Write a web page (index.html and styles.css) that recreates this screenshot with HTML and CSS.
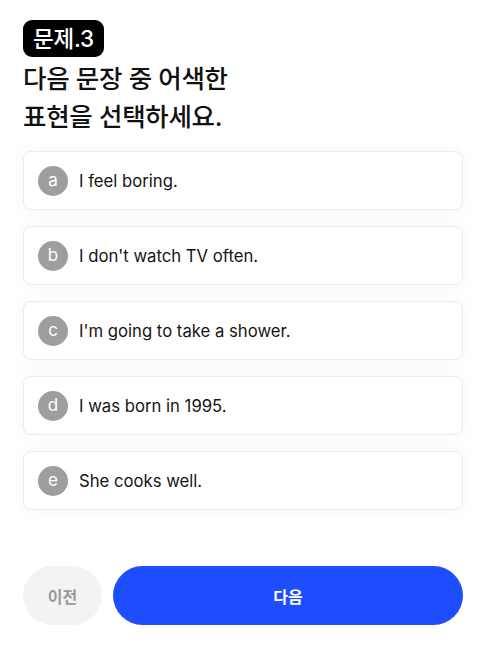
FILE: index.html
```html
<!DOCTYPE html>
<html lang="ko">
<head>
<meta charset="utf-8">
<link rel="stylesheet" href="styles.css">
</head>
<body>
<div class="page">
  <div class="badge">문제.3</div>
  <h1 class="title">다음 문장 중 어색한<br>표현을 선택하세요.</h1>
  <ul class="options">
    <li class="option"><span class="letter">a</span><span class="text">I feel boring.</span></li>
    <li class="option"><span class="letter">b</span><span class="text">I don't watch TV often.</span></li>
    <li class="option"><span class="letter">c</span><span class="text">I'm going to take a shower.</span></li>
    <li class="option"><span class="letter">d</span><span class="text">I was born in 1995.</span></li>
    <li class="option"><span class="letter">e</span><span class="text">She cooks well.</span></li>
  </ul>
  <div class="actions">
    <button class="btn prev">이전</button>
    <button class="btn next">다음</button>
  </div>
</div>
</body>
</html>
```
FILE: styles.css
```css
* { box-sizing: border-box; }
html, body { margin: 0; padding: 0; background: #ffffff; }
body {
  font-family: Inter, "Noto Sans CJK KR", sans-serif;
  color: #111;
}
.page {
  padding: 20px 24px 0 23px;
  display: flex;
  flex-direction: column;
}
.badge {
  align-self: flex-start;
  background: #000;
  color: #fff;
  font-size: 22.5px;
  font-weight: 500;
  height: 37px;
  line-height: 37px;
  padding: 0 10px;
  border-radius: 9px;
  letter-spacing: -0.2px;
}
.title {
  margin: 3px 0 0 0;
  font-size: 25.5px;
  font-weight: 500;
  line-height: 38px;
  letter-spacing: -0.3px;
}
.options {
  list-style: none;
  margin: 15px 0 0 0;
  padding: 0;
  display: flex;
  flex-direction: column;
  gap: 16px;
}
.option {
  height: 59px;
  border: 1px solid #e9ecf1;
  border-radius: 8px;
  background: #fff;
  box-shadow: 0 0 14px rgba(120, 140, 200, 0.08);
  display: flex;
  align-items: center;
  padding: 0 0 0 14px;
  gap: 11px;
}
.letter {
  width: 30px;
  height: 30px;
  border-radius: 50%;
  background: #9e9e9e;
  color: #fff;
  font-size: 17px;
  display: flex;
  align-items: center;
  justify-content: center;
  padding-bottom: 2px;
}
.text {
  font-size: 16.7px;
  color: #141414;
}
.actions {
  margin-top: 56px;
  display: flex;
  gap: 11px;
}
.btn {
  height: 59px;
  border: none;
  border-radius: 30px;
  font-family: Inter, "Noto Sans CJK KR", sans-serif;
  font-size: 16px;
  font-weight: 700;
}
.prev {
  width: 79px;
  background: #f2f3f5;
  color: #9a9a9a;
}
.next {
  flex: 1;
  background: #1d4dfd;
  color: #fff;
}
```
